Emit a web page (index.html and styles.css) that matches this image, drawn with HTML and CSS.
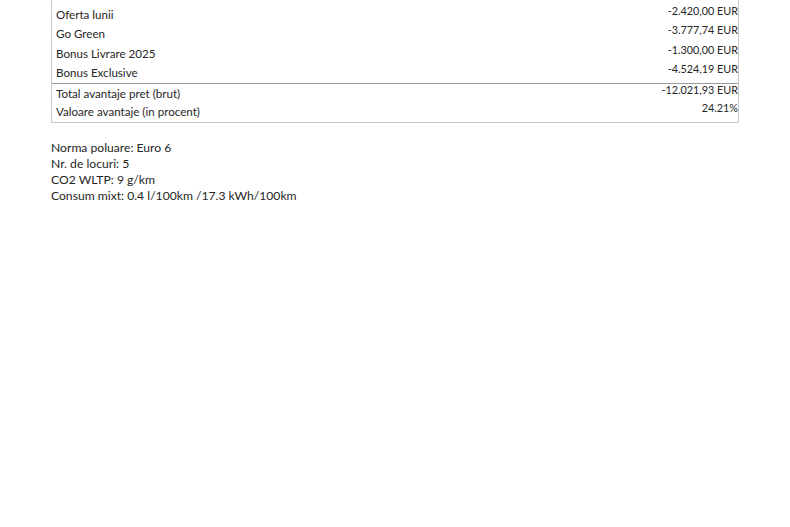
FILE: index.html
```html
<!DOCTYPE html>
<html>
<head>
<meta charset="utf-8">
<link rel="stylesheet" href="styles.css">
</head>
<body>
<div class="page">
  <div class="table">
    <div class="head">Avantaje aplicate la pretul de lista (brut)</div>
    <div class="row"><span class="label">Oferta lunii</span><span class="value">-2.420,00 EUR</span></div>
    <div class="row"><span class="label">Go Green</span><span class="value">-3.777,74 EUR</span></div>
    <div class="row"><span class="label">Bonus Livrare 2025</span><span class="value">-1.300,00 EUR</span></div>
    <div class="row"><span class="label">Bonus Exclusive</span><span class="value">-4.524,19 EUR</span></div>
    <div class="row total"><span class="label">Total avantaje pret (brut)</span><span class="value">-12.021,93 EUR</span></div>
    <div class="row"><span class="label">Valoare avantaje (in procent)</span><span class="value">24.21%</span></div>
  </div>
  <div class="specs">
    <div>Norma poluare: Euro 6</div>
    <div>Nr. de locuri: 5</div>
    <div>CO2 WLTP: 9 g/km</div>
    <div>Consum mixt: 0.4 l/100km /17.3 kWh/100km</div>
  </div>
</div>
</body>
</html>
```

FILE: styles.css
```css
html, body {
  margin: 0;
  padding: 0;
  background: #fff;
}
body {
  font-family: Lato, "Open Sans", sans-serif;
  font-size: 12px;
  color: #262626;
}
.page {
  padding-left: 51px;
  width: 688px;
}
.table {
  margin-top: -16px;
  border-left: 1px solid #c8c8c8;
  border-right: 1px solid #c8c8c8;
  border-bottom: 1px solid #c8c8c8;
}
.head {
  height: 20.5px;
  font-weight: bold;
  padding-left: 180px;
  line-height: 14px;
  color: #333;
}
.row {
  display: flex;
  justify-content: space-between;
  align-items: flex-start;
  height: 19.5px;
}
.label {
  padding-left: 4px;
  padding-top: 3px;
  line-height: 14px;
  font-size: 11.6px;
}
.value {
  line-height: 12px;
  font-size: 10.8px;
}
.total {
  border-top: 1px solid #999;
  height: 18.5px;
}
.specs {
  margin-top: 17px;
  line-height: 16.3px;
  font-size: 12.15px;
}
```
